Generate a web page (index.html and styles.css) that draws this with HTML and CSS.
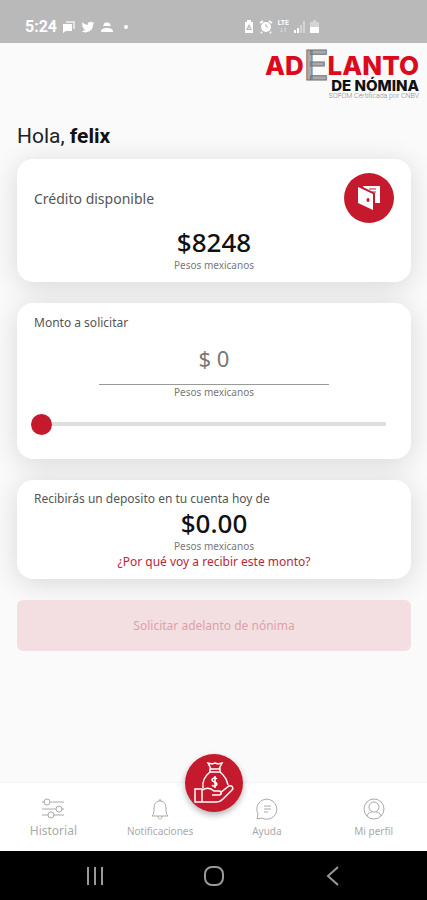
FILE: index.html
```
<!DOCTYPE html>
<html lang="es">
<head>
    <meta charset="UTF-8">
    <meta name="viewport" content="width=device-width, initial-scale=1.0, viewport-fit=cover">
    <title>Adelanto de Nómina</title>
    <link rel="stylesheet" href="styles.css">
</head>
<body>
    <div class="status-bar">
        <div class="status-left">
            <span class="clock">5:24</span>
            <svg width="14" height="14" viewBox="0 0 14 14"><path d="M4 1h9v8h-2V3H4z" opacity=".6"/><path d="M1 4h9v7H4l-3 2z"/></svg>
            <svg width="14" height="14" viewBox="0 0 24 24"><path d="M23 5a9 9 0 0 1-2.600.7 4.500 4.500 0 0 0 2-2.500 9 9 0 0 1-2.900 1.100 4.600 4.600 0 0 0-7.800 4.200A13 13 0 0 1 2.300 3.700a4.600 4.600 0 0 0 1.400 6.100 4.500 4.500 0 0 1-2-.6 4.600 4.600 0 0 0 3.600 4.600 4.600 4.600 0 0 1-2 .1 4.600 4.600 0 0 0 4.200 3.200A9.200 9.200 0 0 1 .8 19 13 13 0 0 0 20.800 7.400 9 9 0 0 0 23 5z"/></svg>
            <svg width="14" height="14" viewBox="0 0 14 14"><path d="M1 12c0-3 2-4 6-4s6 1 6 4zM4 4c0-2 6-2 6 0l1 2H3z"/></svg>
            <svg width="14" height="14" viewBox="0 0 14 14"><circle cx="7" cy="7" r="2"/></svg>
        </div>
        <div class="status-right">
            <svg width="10" height="14" viewBox="0 0 10 14"><path fill-rule="evenodd" d="M3 0h4v2h2v11H1V2h2zM5 4L2 10h6zm0 3l1 2H4z"/></svg>
            <svg width="14" height="14" viewBox="0 0 14 14"><path d="M1 3l3-2M13 3l-3-2M3 12l-1 1M11 12l1 1" stroke="#fff" stroke-width="2"/><circle cx="7" cy="7" r="5"/><path d="M7 4v3h2" fill="none" stroke="#b9b9b9"/></svg>
            <span class="network">LTE<br>↓↑</span>
            <svg width="11" height="12" viewBox="0 0 11 12"><path d="M0 9h2v3H0zM3 7h2v5H3z"/><path d="M6 4h2v8H6zM9 0h2v12H9z" opacity=".4"/></svg>
            <svg width="9" height="14" viewBox="0 0 9 14"><path d="M3 0h3v2h3v5H0V2h3z" opacity=".4"/><path d="M0 7h9v6H0z"/></svg>
        </div>
    </div>

    <main class="content">
        <div class="logo">
            <div class="logo-name">AD<span class="logo-e">E</span>LANTO</div>
            <div class="logo-sub">DE NÓMINA</div>
            <div class="logo-note">SOFOM Certificada por CNBV</div>
        </div>

        <h1 class="greeting">Hola, <strong>felix</strong></h1>

        <section class="card card-credit">
            <div class="credit-head">
                <h2 class="credit-title">Crédito disponible</h2>
                <div class="wallet">
                    <svg width="24" height="26" viewBox="0 0 24 26">
                        <path d="M6 1h17v17h-5V8L6 2z" fill="#fff"/>
                        <path d="M12 4h7M15 7h4" stroke="#c51a2d" stroke-width="1"/>
                        <path d="M1 2l15 7v16L1 18z" fill="#fff"/>
                        <ellipse cx="11" cy="15" rx="1.500" ry="2" fill="#c51a2d"/>
                        <path d="M17 8v11" stroke="#c51a2d"/>
                    </svg>
                </div>
            </div>
            <div class="amount">$8248</div>
            <div class="currency">Pesos mexicanos</div>
        </section>

        <section class="card card-request">
            <label class="card-title" for="monto">Monto a solicitar</label>
            <input class="amount-input" id="monto" type="text" value="$ 0">
            <div class="currency">Pesos mexicanos</div>
            <input class="slider" type="range" min="0" max="8248" value="0" aria-label="Monto a solicitar">
        </section>

        <section class="card card-deposit">
            <h2 class="card-title">Recibirás un deposito en tu cuenta hoy de</h2>
            <div class="amount">$0.00</div>
            <div class="currency">Pesos mexicanos</div>
            <a class="why" href="#">¿Por qué voy a recibir este monto?</a>
        </section>

        <button class="submit" type="button" disabled>Solicitar adelanto de nónima</button>
    </main>

    <nav class="tabs">
        <a class="tab" href="#">
            <svg width="24" height="22" viewBox="0 0 24 22">
                <path d="M1 4h3M9 4h14M1 11h14M20 11h3M1 17h6M12 17h11"/>
                <circle cx="6" cy="4" r="3"/><circle cx="18" cy="11" r="3"/><circle cx="10" cy="17" r="3"/>
            </svg>
            <span class="tab-large">Historial</span>
        </a>
        <a class="tab" href="#">
            <svg width="24" height="22" viewBox="0 0 24 22">
                <path d="M4 18c2-2 2-4 2-8 0-5 3-7 6-7s6 2 6 7c0 4 0 6 2 8zM10 18c0 4 4 4 4 0M11 3c0-2 2-2 2 0"/>
            </svg>
            <span>Notificaciones</span>
        </a>
        <a class="tab-main" href="#" aria-label="Solicitar adelanto">
            <svg width="42" height="44" viewBox="0 0 42 44">
                <path d="M18 8l-3-6 4 1 3-1 3 1 4-1-3 6zM17 8h10v3H17z"/>
                <path d="M17 11c-5 4-8 9-7 16M27 11c5 4 7 8 8 13"/>
                <path d="M2 28h7v13H2zM9 29c5-3 9-2 12 1h5c3 0 3 4 0 4h-7M27 32l9-7c3-1 5 2 3 4l-9 9c-2 2-4 3-7 3H9"/>
                <path d="M24 18c-1-2-5-1-5 1s5 2 5 4-4 3-5 1M22 15v12"/>
            </svg>
        </a>
        <a class="tab" href="#">
            <svg width="24" height="22" viewBox="0 0 24 22">
                <path d="M2 21l1-5A10 10 0 1 1 7 20zM9 8h7M9 11h7M9 14h4"/>
            </svg>
            <span>Ayuda</span>
        </a>
        <a class="tab" href="#">
            <svg width="24" height="22" viewBox="0 0 24 22">
                <circle cx="12" cy="11" r="10"/><circle cx="12" cy="9" r="5"/>
                <path d="M5 18c1-3 3-4 5-4M19 18c-1-3-3-4-5-4"/>
            </svg>
            <span>Mi perfil</span>
        </a>
    </nav>

    <div class="system-nav">
        <button type="button" aria-label="Recientes">
            <svg width="20" height="20" viewBox="0 0 20 20"><path d="M3 1v18M10 1v18M17 1v18"/></svg>
        </button>
        <button type="button" aria-label="Inicio">
            <svg width="20" height="20" viewBox="0 0 20 20"><rect x="1" y="1" width="18" height="18" rx="7"/></svg>
        </button>
        <button type="button" aria-label="Atrás">
            <svg width="20" height="20" viewBox="0 0 20 20"><path d="M15 1L5 10l10 9"/></svg>
        </button>
    </div>
</body>
</html>
```
FILE: styles.css
```
:root {
    --red: #c51a2d;
    --text: #555;
    --muted: #aaa;
}

* {
    box-sizing: border-box;
    margin: 0;
    padding: 0;
}

body {
    min-height: 100vh;
    display: flex;
    flex-direction: column;
    background: #fafafa;
    color: var(--text);
    font-family: "Noto Sans", "Open Sans", sans-serif;
}

a {
    text-decoration: none;
}

/* Barra de estado */
.status-bar {
    height: 43px;
    padding: 10px 108px 0 25px;
    display: flex;
    align-items: center;
    justify-content: space-between;
    background: #b9b9b9;
    color: #fff;
    fill: #fff;
}

.status-left,
.status-right {
    display: flex;
    align-items: center;
    gap: 5px;
}

.clock {
    font: 700 16px/20px Roboto, sans-serif;
}

.network {
    font: 700 7px/7px Roboto, sans-serif;
    text-align: center;
}

/* Contenido */
.content {
    flex: 1;
    padding: 8px 16px 20px 17px;
    display: flex;
    flex-direction: column;
}

.logo {
    align-self: flex-end;
    margin-right: -8px;
    display: flex;
    flex-direction: column;
    align-items: flex-end;
    font-family: Inter, sans-serif;
}

.logo-name {
    display: flex;
    align-items: center;
    height: 29px;
    color: #dc0a1c;
    font-size: 26px;
    font-weight: 800;
}

.logo-e {
    color: #aaa;
    font: 500 42px/30px Roboto, sans-serif;
    -webkit-text-stroke: 1px #777;
}

.logo-sub {
    color: #111;
    font-size: 15px;
    font-weight: 800;
    line-height: 12px;
}

.logo-note {
    color: #888;
    font: 300 7px/9px Roboto, sans-serif;
}

.greeting {
    margin: 22px 0 10px;
    color: #222;
    font: 400 21px/26px Roboto, sans-serif;
}

.greeting strong {
    color: #111;
    font-weight: 700;
}

.card {
    margin-bottom: 21px;
    padding: 12px 17px;
    display: flex;
    flex-direction: column;
    background: #fff;
    border-radius: 16px;
    box-shadow: 0 4px 28px rgba(0, 0, 0, 0.14);
}

.card-credit {
    padding-top: 14px;
    padding-bottom: 10px;
}

.credit-head {
    display: flex;
    align-items: center;
    justify-content: space-between;
}

.credit-title {
    font-size: 14px;
    font-weight: 400;
}

.wallet {
    width: 50px;
    height: 50px;
    display: flex;
    align-items: center;
    justify-content: center;
    background: var(--red);
    border-radius: 50%;
}

.card-title {
    font-size: 12px;
    font-weight: 400;
    line-height: 16px;
}

.amount {
    margin-top: 3px;
    color: #111;
    font-size: 26px;
    font-weight: 500;
    line-height: 32px;
    text-align: center;
}

.currency {
    color: #777;
    font-size: 10px;
    line-height: 14px;
    text-align: center;
}

.amount-input {
    align-self: center;
    width: 64%;
    height: 53px;
    margin-top: 1px;
    background: none;
    border: 0;
    border-bottom: 1px solid #999;
    color: #777;
    font: 400 22px "Noto Sans", sans-serif;
    text-align: center;
    outline: none;
}

.slider {
    appearance: none;
    -webkit-appearance: none;
    height: 22px;
    margin: 14px 8px 12px -3px;
    background: linear-gradient(#dedede, #dedede) center / 100% 4px no-repeat;
}

.slider::-webkit-slider-thumb {
    -webkit-appearance: none;
    width: 21px;
    height: 21px;
    background: var(--red);
    border-radius: 50%;
}

.card-deposit {
    padding-top: 11px;
    padding-bottom: 8px;
}

.card-deposit .amount {
    margin-top: 0;
}

.why {
    color: #b8283a;
    font-size: 12px;
    line-height: 18px;
    text-align: center;
}

.submit {
    height: 51px;
    background: #f3dfe1;
    border: 0;
    border-radius: 6px;
    color: #dfa0ab;
    font: 400 12px "Noto Sans", sans-serif;
}

/* Navegación inferior */
.tabs {
    height: 69px;
    display: grid;
    grid-template-columns: repeat(4, 1fr);
    position: relative;
    background: #fff;
    border-top: 1px solid #f3f3f3;
}

.tab {
    display: flex;
    flex-direction: column;
    align-items: center;
    padding-top: 15px;
    color: var(--muted);
    font-size: 10px;
    line-height: 22px;
}

.tab-large {
    font-size: 12px;
}

.tab svg {
    fill: none;
    stroke: var(--muted);
}

.tab-main {
    position: absolute;
    top: -29px;
    left: 50%;
    width: 58px;
    height: 58px;
    display: flex;
    align-items: center;
    justify-content: center;
    transform: translateX(-50%);
    background: var(--red);
    border-radius: 50%;
    box-shadow: 0 3px 6px rgba(0, 0, 0, 0.3);
}

.tab-main svg {
    fill: none;
    stroke: #fff;
    stroke-width: 1.5;
}

.system-nav {
    height: 49px;
    padding: 0 35px;
    display: grid;
    grid-template-columns: repeat(3, 1fr);
    background: #000;
}

.system-nav button {
    display: flex;
    align-items: center;
    justify-content: center;
    background: none;
    border: 0;
}

.system-nav svg {
    fill: none;
    stroke: #999;
    stroke-width: 2;
}
```
